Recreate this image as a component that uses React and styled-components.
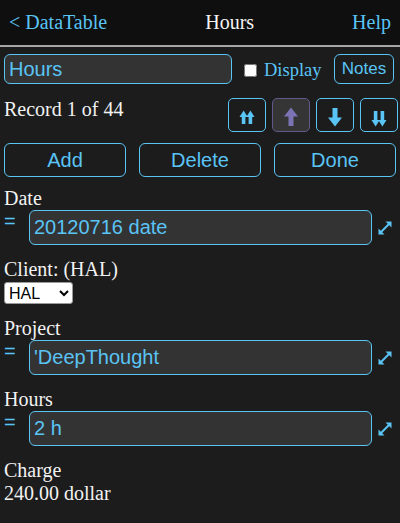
import React from "react";
import styled, { createGlobalStyle } from "styled-components";

const BLUE = "#5ac4f5";
const SERIF = `"Liberation Serif", "Times New Roman", serif`;
const SANS = `"Liberation Sans", Arial, sans-serif`;

const Global = createGlobalStyle`
  html, body { margin: 0; padding: 0; background: #1c1c1c; }
  body { font-family: ${SERIF}; color: #f2f2f2; }
  * { box-sizing: border-box; }
`;

const Page = styled.div`
  width: 400px;
  min-height: 523px;
  background: #1c1c1c;
`;

const Header = styled.header`
  height: 47px;
  background: #0f0f0f;
  border-bottom: 2px solid #a6a6a6;
  display: flex;
  align-items: center;
  justify-content: space-between;
  padding: 0 9px 1px 9px;
  font-family: ${SERIF};
  font-size: 20px;
  line-height: 23px;
`;

const HeaderLink = styled.span`
  color: ${BLUE};
`;

const HeaderTitle = styled.span`
  color: #f5f5f5;
`;

const Body = styled.main`
  padding-top: 7px;
`;

const NameRow = styled.div`
  display: flex;
  align-items: center;
  padding: 0 6px 0 4px;
  height: 30px;
`;

const NameInput = styled.input`
  width: 228px;
  height: 30px;
  background: #333;
  border: 1px solid ${BLUE};
  border-radius: 6px;
  color: ${BLUE};
  font-family: ${SANS};
  font-size: 20px;
  padding: 0 4px;
  outline: none;
`;

const CheckLabel = styled.label`
  display: flex;
  align-items: center;
  margin-left: 12px;
  color: ${BLUE};
  font-family: ${SERIF};
  font-size: 18.5px;
  line-height: 23px;
  padding-top: 2px;
`;

const Check = styled.input`
  margin: 0 7px 0 0;
  width: 13px;
  height: 13px;
`;

const OutlineButton = styled.button`
  background: transparent;
  border: 1px solid ${BLUE};
  border-radius: 6px;
  color: ${BLUE};
  font-family: ${SANS};
  font-size: ${(p) => p.$fs || 20}px;
  height: ${(p) => p.$h || 34}px;
  padding: 0 8px;
  cursor: pointer;
`;

const NotesButton = styled(OutlineButton)`
  margin-left: auto;
  width: 60px;
  padding: 0;
`;

const RecordRow = styled.div`
  display: flex;
  justify-content: space-between;
  align-items: flex-start;
  margin-top: 14px;
  padding: 0 2px 0 4px;
`;

const RecordText = styled.span`
  font-family: ${SERIF};
  font-size: 20px;
  line-height: 23px;
  color: #f2f2f2;
`;

const NavGroup = styled.div`
  display: flex;
  gap: 6px;
`;

const NavButton = styled.button`
  width: 38px;
  height: 34px;
  padding: 4px 0 0 0;
  display: flex;
  align-items: center;
  justify-content: center;
  border-radius: 5px;
  border: 1px solid ${(p) => (p.disabled ? "#5f5a8a" : BLUE)};
  background: ${(p) => (p.disabled ? "#353535" : "transparent")};
  color: ${(p) => (p.disabled ? "#7b74b4" : BLUE)};
  cursor: pointer;

  svg {
    flex: none;
  }
`;

const ActionRow = styled.div`
  display: grid;
  grid-template-columns: repeat(3, 1fr);
  gap: 13px;
  padding: 0 4px;
  margin-top: 11px;
`;

const Fields = styled.div`
  padding-top: 10px;
  display: flex;
  flex-direction: column;
  gap: 13px;
`;

const Field = styled.div`
  display: flex;
  flex-direction: column;
  align-items: flex-start;
`;

const Label = styled.div`
  font-family: ${SERIF};
  font-size: 20px;
  line-height: 23px;
  color: #f2f2f2;
  padding-left: 4px;
`;

const FieldRow = styled.div`
  display: flex;
  align-items: flex-start;
  width: 100%;
  padding-left: 4px;
`;

const Eq = styled.span`
  width: 25px;
  flex: none;
  color: ${BLUE};
  font-family: ${SANS};
  font-size: 20px;
  line-height: 23px;
`;

const ValueInput = styled.input`
  flex: 1;
  min-width: 0;
  height: 35px;
  background: #333;
  border: 1px solid ${BLUE};
  border-radius: 6px;
  color: ${BLUE};
  font-family: ${SANS};
  font-size: 20px;
  padding: 0 4px;
  outline: none;
`;

const ExpandBox = styled.span`
  flex: none;
  width: 14px;
  height: 35px;
  margin: 0 8px 0 6px;
  display: flex;
  align-items: center;
  color: ${BLUE};
`;

const Select = styled.select`
  margin: 1px 0 0 4px;
  width: 69px;
  height: 22px;
  font-family: ${SANS};
  font-size: 16px;
  color: #000;
  background: #fff;
  border: 1px solid #9a9a9a;
  border-radius: 3px;
`;

const ArrowSvg = ({ children }) => (
  <svg width="16" height="20" viewBox="0 0 16 20" fill="currentColor">
    {children}
  </svg>
);

const FirstIcon = () => (
  <ArrowSvg>
    <polygon points="4.6,3.5 8.7,10 6.4,10 6.4,17 2.8,17 2.8,10 0.5,10" />
    <polygon points="11.4,3.5 15.5,10 13.2,10 13.2,17 9.6,17 9.6,10 7.3,10" />
  </ArrowSvg>
);

const UpIcon = () => (
  <ArrowSvg>
    <polygon points="8,0.5 15,9.5 10.5,9.5 10.5,19 5.5,19 5.5,9.5 1,9.5" />
  </ArrowSvg>
);

const DownIcon = () => (
  <ArrowSvg>
    <polygon points="8,19.5 15,10.5 10.5,10.5 10.5,1 5.5,1 5.5,10.5 1,10.5" />
  </ArrowSvg>
);

const LastIcon = () => (
  <ArrowSvg>
    <polygon points="4.6,19.5 8.7,13 6.4,13 6.4,4 2.8,4 2.8,13 0.5,13" />
    <polygon points="11.4,19.5 15.5,13 13.2,13 13.2,4 9.6,4 9.6,13 7.3,13" />
  </ArrowSvg>
);

const ExpandIcon = () => (
  <svg width="14" height="14" viewBox="0 0 14 14">
    <line x1="3" y1="11" x2="11" y2="3" stroke="currentColor" strokeWidth="2" />
    <polygon points="13.5,0.5 13.5,6.5 7.5,0.5" fill="currentColor" />
    <polygon points="0.5,13.5 0.5,7.5 6.5,13.5" fill="currentColor" />
  </svg>
);

const ValueField = ({ label, value }) => (
  <Field>
    <Label>{label}</Label>
    <FieldRow>
      <Eq>=</Eq>
      <ValueInput defaultValue={value} />
      <ExpandBox>
        <ExpandIcon />
      </ExpandBox>
    </FieldRow>
  </Field>
);

export default function App() {
  return (
    <Page>
      <Global />
      <Header>
        <HeaderLink>&lt; DataTable</HeaderLink>
        <HeaderTitle>Hours</HeaderTitle>
        <HeaderLink>Help</HeaderLink>
      </Header>
      <Body>
        <NameRow>
          <NameInput defaultValue="Hours" />
          <CheckLabel>
            <Check type="checkbox" />
            Display
          </CheckLabel>
          <NotesButton $fs={17} $h={30}>Notes</NotesButton>
        </NameRow>
        <RecordRow>
          <RecordText>Record 1 of 44</RecordText>
          <NavGroup>
            <NavButton><FirstIcon /></NavButton>
            <NavButton disabled><UpIcon /></NavButton>
            <NavButton><DownIcon /></NavButton>
            <NavButton><LastIcon /></NavButton>
          </NavGroup>
        </RecordRow>
        <ActionRow>
          <OutlineButton>Add</OutlineButton>
          <OutlineButton>Delete</OutlineButton>
          <OutlineButton>Done</OutlineButton>
        </ActionRow>
        <Fields>
          <ValueField label="Date" value="20120716 date" />
          <Field>
            <Label>Client: (HAL)</Label>
            <Select defaultValue="HAL">
              <option>HAL</option>
            </Select>
          </Field>
          <ValueField label="Project" value="'DeepThought" />
          <ValueField label="Hours" value="2 h" />
          <Field>
            <Label>Charge</Label>
            <Label>240.00 dollar</Label>
          </Field>
        </Fields>
      </Body>
    </Page>
  );
}
